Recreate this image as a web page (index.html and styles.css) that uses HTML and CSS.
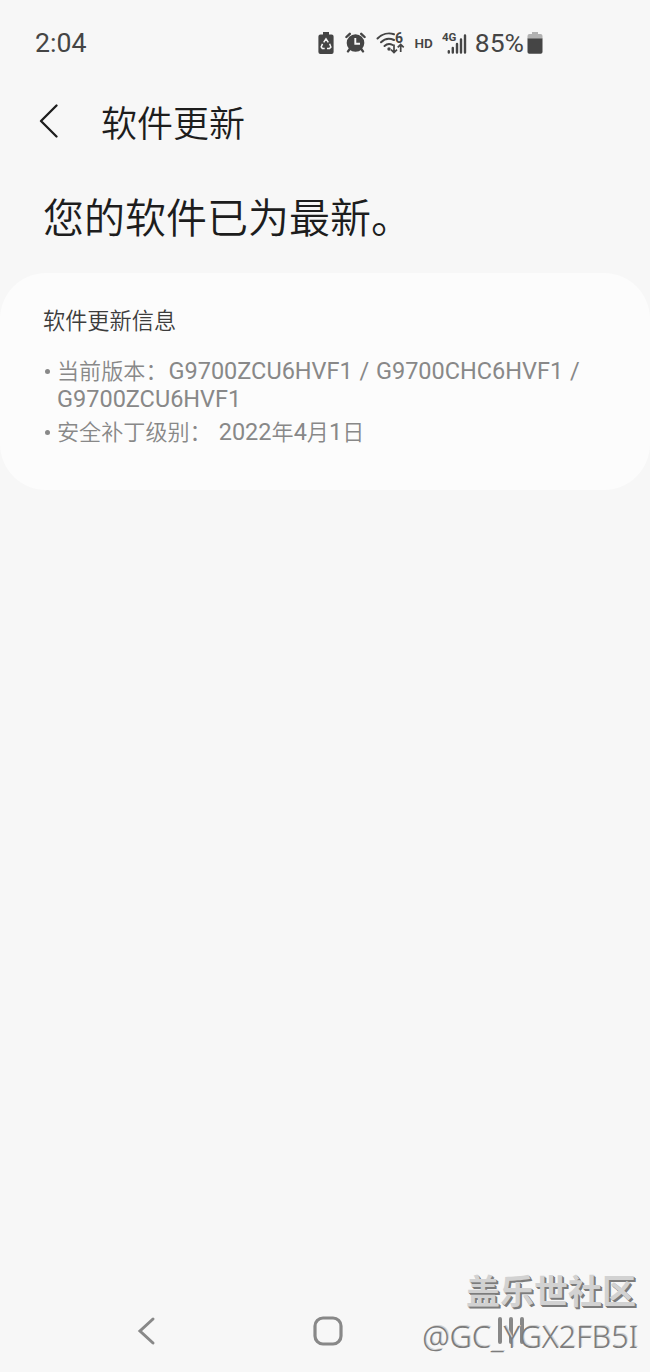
FILE: index.html
```html
<!DOCTYPE html>
<html lang="zh-CN">
<head>
    <meta charset="UTF-8">
    <meta name="viewport" content="width=device-width, initial-scale=1.0">
    <title>软件更新</title>
    <link rel="stylesheet" href="styles.css">
</head>
<body>
    <div class="screen">
        <div class="status-bar">
            <span class="clock">2:04</span>
            <div class="status-icons">
                <!-- battery recycle -->
                <svg class="icon-saver" width="16" height="22" viewBox="0 0 16 22">
                    <path d="M5 0h6v2.400h2.600a2 2 0 0 1 2 2V20a2 2 0 0 1-2 2H2.400a2 2 0 0 1-2-2V4.400a2 2 0 0 1 2-2H5z" fill="#454545"/>
                    <path d="M5.700 10.300L8 6.800l2.300 3.500M11.600 11.800l1.300 3.200-1.400 1.500H9M6.700 16.500H4.300L3.200 15l1.300-3.100" fill="none" stroke="#f7f7f7" stroke-width="1.500"/>
                </svg>
                <!-- alarm -->
                <svg class="icon-alarm" width="21" height="21" viewBox="0 0 21 21">
                    <circle cx="10.500" cy="11" r="8.800" fill="#454545"/>
                    <path d="M1.400 5l3.400-3.200M19.600 5l-3.400-3.200M4.800 17l-1.800 2.400M16.200 17l1.800 2.400" stroke="#454545" stroke-width="2.400" stroke-linecap="round"/>
                    <path d="M10.300 6v5.800h4.700" fill="none" stroke="#f7f7f7" stroke-width="1.900"/>
                </svg>
                <!-- wifi 6 -->
                <svg class="icon-wifi" width="29" height="28" viewBox="0 -2 29 28">
                    <g fill="none" stroke="#454545" stroke-width="2" stroke-linecap="round">
                        <path d="M1.500 7.500C6 2.900 12.500 1.400 18 3.300"/>
                        <path d="M5 11.300C8.500 7.700 13.500 6.800 18 9"/>
                        <path d="M8.500 15c2.500-2.500 5.500-2.500 8.200-1"/>
                    </g>
                    <circle cx="13" cy="18" r="1.700" fill="#454545"/>
                    <path d="M18 13.500v8M15 18.600l3 3 3-3M24.700 21v-7.500M21.700 16.400l3-3 3 3" fill="none" stroke="#454545" stroke-width="1.700"/>
                    <text class="wifi-gen" x="19" y="11.500">6</text>
                </svg>
                <span class="hd">HD</span>
                <!-- signal -->
                <svg class="icon-signal" width="26" height="28" viewBox="0 -2 26 28">
                    <text class="net" x="0" y="9.500">4G</text>
                    <path d="M6.800 20.300v1.200M10.800 17v4.500M15 13v8.500M19 8.500v13M23 4.500v17" stroke="#454545" stroke-width="2.400" stroke-linecap="round"/>
                </svg>
                <span class="percent">85%</span>
                <!-- battery -->
                <svg class="icon-battery" width="16" height="22" viewBox="0 0 16 22">
                    <path d="M5 0h6v2h2.500a2 2 0 0 1 2 2v3H.5V4a2 2 0 0 1 2-2H5z" fill="#b2b2b2"/>
                    <path d="M.5 6.500h15V20a1.800 1.800 0 0 1-1.800 1.800H2.300A1.800 1.800 0 0 1 .5 20z" fill="#454545"/>
                </svg>
            </div>
        </div>

        <div class="app-bar">
            <svg class="back" width="20" height="34" viewBox="0 0 20 34">
                <path d="M17.500 1.500L2 17l15.500 15.500" fill="none" stroke="#1d1d1d" stroke-width="2.300" stroke-linecap="round" stroke-linejoin="round"/>
            </svg>
            <span class="app-title">软件更新</span>
        </div>

        <h1 class="headline">您的软件已为最新。</h1>

        <div class="card">
            <h2 class="card-title">软件更新信息</h2>
            <ul class="info">
                <li>当前版本：<span class="latin first">G9700ZCU6HVF1 / G9700CHC6HVF1 /</span><br><span class="latin">G9700ZCU6HVF1</span></li>
                <li>安全补丁级别：<span class="latin date">2022</span>年<span class="latin">4</span>月<span class="latin">1</span>日</li>
            </ul>
        </div>

        <div class="nav-bar">
            <svg width="20" height="30" viewBox="0 0 20 30">
                <path d="M16 3L3 15l13 12" fill="none" stroke="#888" stroke-width="3" stroke-linecap="round"/>
            </svg>
            <svg width="30" height="30" viewBox="0 0 30 30">
                <rect x="2" y="2" width="26" height="26" rx="8" fill="none" stroke="#888" stroke-width="3.200"/>
            </svg>
            <svg width="28" height="30" viewBox="0 0 28 30">
                <path d="M2 3v23M13 3v23M24 3v23" stroke="#888" stroke-width="4" stroke-linecap="round"/>
            </svg>
        </div>

        <!-- community stamp over the nav bar -->
        <div class="watermark">
            <div class="mark-name">盖乐世社区</div>
            <div class="mark-user">@GC_YGX2FB5I</div>
        </div>
    </div>
</body>
</html>
```
FILE: styles.css
```css
body{
    margin: 0;
    background: #f7f7f7;
    font-family: Roboto, "Noto Sans CJK SC", sans-serif;
    color: #1d1d1d;
}

.screen{
    position: relative;
    display: flex;
    flex-direction: column;
    width: 650px;
    height: 1372px;
    overflow: hidden;
}

.status-bar{
    display: flex;
    justify-content: space-between;
    align-items: center;
    height: 85px;
    padding: 0 107px 0 35px;
    color: #454545;
    font-size: 26.7px;
}

.status-icons{
    display: flex;
    align-items: center;
}

.icon-alarm{
    margin-left: 11px;
}

.icon-wifi{
    margin-left: 10px;
}

.wifi-gen{
    font: bold 14px Roboto, sans-serif;
    fill: #454545;
}

.hd{
    margin-left: 9px;
    font-size: 13.5px;
    font-weight: 600;
}

.icon-signal{
    margin-left: 9px;
}

.net{
    font: bold 11.5px Roboto, sans-serif;
    fill: #454545;
}

.percent{
    margin-left: 7px;
    font-size: 26.5px;
    line-height: 30px;
}

.icon-battery{
    margin-left: 3px;
}

.app-bar{
    display: flex;
    align-items: center;
    height: 72px;
    padding-left: 39px;
}

.app-title{
    margin-left: 42px;
    font-size: 36px;
    font-weight: 350;
}

.headline{
    margin: 27px 0 0 43px;
    font-size: 41px;
    line-height: 70px;
    font-weight: 350;
}

.card{
    box-sizing: border-box;
    height: 217px;
    margin-top: 19px;
    padding: 32px 43px 0 43px;
    border-radius: 46px;
    background: #fcfcfc;
}

.card-title{
    margin: 0;
    font-size: 22.2px;
    line-height: 32px;
    font-weight: 350;
    color: #3c3c3c;
}

.info{
    margin: 20px 0 0;
    padding: 0;
    list-style: none;
    font-size: 22.1px;
    line-height: 28px;
    font-weight: 350;
    color: #888;
}

.info li{
    position: relative;
    margin-bottom: 5px;
    padding-left: 14px;
}

.info li::before{
    content: "";
    position: absolute;
    left: 2px;
    top: 12px;
    width: 5px;
    height: 5px;
    border-radius: 50%;
    background: #888;
}

.latin{
    font-size: 23.5px;
    font-weight: 400;
    white-space: nowrap;
}

.first{
    margin-left: 1px;
    word-spacing: 0.9px;
}

.date{
    margin-left: 7px;
}

.nav-bar{
    display: flex;
    justify-content: space-between;
    align-items: center;
    height: 82px;
    margin-top: auto;
    padding: 0 124px 0 137px;
}

.watermark{
    position: absolute;
    right: 12px;
    bottom: 14px;
    text-align: right;
}

.mark-name{
    margin-right: 2px;
    font-size: 34px;
    line-height: 44px;
    font-weight: 700;
    color: #d2d2d2;
    text-shadow: 1px 1px 0 #7c7c7c, 2px 2px 0 #7c7c7c;
}

.mark-user{
    font-family: "Noto Sans", sans-serif;
    font-size: 30.7px;
    line-height: 44px;
    font-weight: 350;
    color: #7c7c7c;
    text-shadow: 1px -1px 0 #d2d2d2;
}
```
